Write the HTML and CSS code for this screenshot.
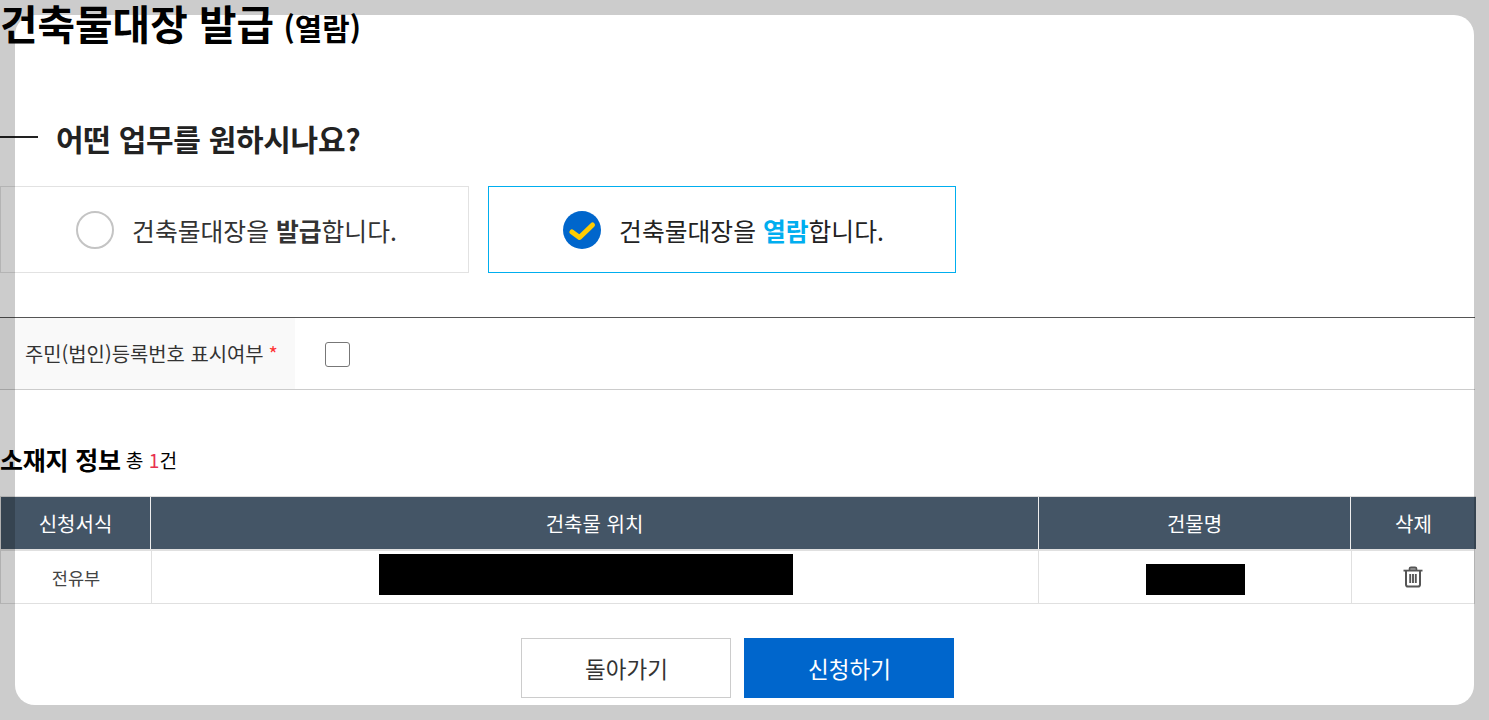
FILE: index.html
```html
<!DOCTYPE html>
<html lang="ko">
<head>
<meta charset="utf-8">
<title>건축물대장 발급 (열람)</title>
<link rel="stylesheet" href="styles.css">
</head>
<body>
<main class="page">
  <h1 class="title">건축물대장 발급 <small>(열람)</small></h1>
  <h2 class="question"><span class="dash"></span>어떤 업무를 원하시나요?</h2>
  <div class="choices">
    <div class="choice">
      <span class="radio"></span>
      <span>건축물대장을 <b>발급</b>합니다.</span>
    </div>
    <div class="choice active">
      <svg class="radio-on" viewBox="0 0 38 38" aria-hidden="true">
        <circle cx="19" cy="19" r="19" fill="#0066cc"/>
        <path d="M9 21L16.500 26.500L29.500 14" fill="none" stroke="#ffcc00" stroke-width="5" stroke-linecap="round" stroke-linejoin="round"/>
      </svg>
      <span>건축물대장을 <b>열람</b>합니다.</span>
    </div>
  </div>
  <div class="form-row">
    <div class="form-label">주민(법인)등록번호 표시여부 <i>*</i></div>
    <div class="form-value"><span class="checkbox"></span></div>
  </div>
  <div class="list-title"><strong>소재지 정보</strong> <span>총 <em>1</em>건</span></div>
  <div class="table">
    <div class="thead">
      <div>신청서식</div>
      <div>건축물 위치</div>
      <div>건물명</div>
      <div>삭제</div>
    </div>
    <div class="tbody">
      <div>전유부</div>
      <div class="cell-addr"><span class="mask-addr"></span></div>
      <div class="cell-name"><span class="mask-name"></span></div>
      <div>
        <svg class="trash" viewBox="0 0 20 22" aria-hidden="true">
          <path d="M0.500 4.600h19" fill="none" stroke="#555" stroke-width="1.800"/>
          <path d="M6.500 4V2.600Q6.500 1.200 8 1.200h4Q13.500 1.200 13.500 2.600V4" fill="#888" stroke="#555" stroke-width="1.600"/>
          <path d="M3 5v13.500Q3 20.600 5 20.600h10Q17 20.600 17 18.500V5" fill="none" stroke="#555" stroke-width="2"/>
          <path d="M7.200 8v9M10 8v9M12.800 8v9" fill="none" stroke="#555" stroke-width="1.900"/>
        </svg>
      </div>
    </div>
  </div>
  <div class="actions">
    <button class="btn" type="button">돌아가기</button>
    <button class="btn primary" type="button">신청하기</button>
  </div>
</main>
<div class="modal-hole"></div>
</body>
</html>
```
FILE: styles.css
```css
* { box-sizing: border-box; }
html, body { margin: 0; height: 720px; overflow: hidden; background: #fff; }
body { font-family: "Noto Sans CJK KR", "Noto Sans", sans-serif; color: #222; }
.page { width: 1475px; }
.title { margin: 0; height: 46px; font-size: 40.800px; line-height: 46px; font-weight: 700; color: #000; }
.title small { margin-left: -2px; font-size: 29.800px; font-weight: 700; }
.question { display: flex; align-items: center; margin: 67px 0 0; height: 50px; font-size: 30px; font-weight: 700; color: #222; letter-spacing: -0.3px; }
.dash { width: 38px; height: 2px; margin: 0 18px 2px 0; background: #222; }
.choices { display: flex; gap: 19px; margin-top: 23px; }
.choice { display: flex; align-items: center; justify-content: center; gap: 18px; width: 469px; height: 87px; padding-left: 4px; border: 1px solid #e2e2e2; font-size: 24.800px; color: #333; }
.choice b { font-weight: 700; }
.choice.active { width: 468px; padding-left: 3px; border-color: #00aeef; color: #222; }
.choice.active b { color: #00aeef; }
.radio { width: 38px; height: 38px; border: 2px solid #c4c4c4; border-radius: 50%; background: #fff; }
.radio-on { width: 38px; height: 38px; }
.form-row { display: flex; height: 73px; margin-top: 44px; border-top: 1px solid #555; border-bottom: 1px solid #ccc; }
.form-label { display: flex; align-items: center; gap: 5px; width: 295px; padding-left: 25px; background: #f9f9f9; font-size: 19.900px; color: #333; }
.form-label i { font-style: normal; color: #f33; }
.form-value { display: flex; align-items: center; padding: 2px 0 0 30px; }
.checkbox { width: 25px; height: 25px; border: 1px solid #777; border-radius: 3px; background: #fff; }
.list-title { display: flex; align-items: center; gap: 5px; margin-top: 51px; height: 36px; color: #000; }
.list-title strong { font-size: 25px; font-weight: 700; letter-spacing: -0.2px; }
.list-title span { padding-top: 2px; font-size: 19.200px; }
.list-title em { font-style: normal; color: #e8304f; }
.table { margin-top: 19px; }
.thead, .tbody { display: grid; text-align: center; }
.thead { grid-template-columns: 150px 888px 312px 125px; width: 1476px; height: 53px; border-top: 1px solid #ddd; border-left: 1px solid #ddd; background: #445566; color: #fff; font-size: 20px; }
.thead > div { display: flex; align-items: center; justify-content: center; border-right: 1px solid #eee; }
.thead > div:last-child { border-right: 0; }
.tbody { grid-template-columns: 151px 887px 313px 123px; width: 1475px; height: 55px; border-top: 2px solid #e0e0e0; border-bottom: 1px solid #e0e0e0; border-left: 1px solid #ddd; font-size: 17.600px; color: #444; }
.tbody > div { display: flex; align-items: center; justify-content: center; border-right: 1px solid #e0e0e0; }
.cell-addr { padding: 0 0 6px; }
.mask-addr { display: block; width: 414px; height: 41px; background: #000; margin-right: 18px; }
.mask-name { display: block; width: 99px; height: 31px; background: #000; margin-top: 4px; }
.trash { width: 20px; height: 22px; }
.actions { display: flex; justify-content: center; gap: 13px; margin-top: 34px; margin-left: -1px; }
.btn { width: 210px; height: 60px; padding: 0 0 0 2px; border: 1px solid #ccc; background: #fff; font: 400 22.500px "Noto Sans CJK KR", sans-serif; color: #333; }
.btn.primary { border-color: #0066cc; background: #0066cc; color: #fff; }
.modal-hole { position: absolute; left: 15px; top: 15px; width: 1459px; height: 690px; border-radius: 20px; box-shadow: 0 0 0 1500px rgba(0, 0, 0, 0.2); pointer-events: none; }
```
